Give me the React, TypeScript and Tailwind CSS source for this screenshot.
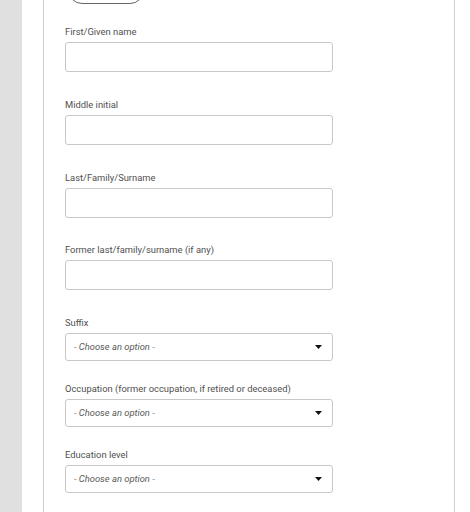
import React from "react";

const font = { fontFamily: "Roboto, 'Liberation Sans', sans-serif" };

function TextField({ label, mb }: { label: string; mb: string }) {
  return (
    <div className={mb}>
      <div className="text-[9.4px] leading-[14px] text-[#505050]">{label}</div>
      <div className="mt-[3px] h-[30px] w-[268px] rounded-[3px] border border-[#c8c8c8] bg-white" />
    </div>
  );
}

function SelectField({ label, mb }: { label: string; mb: string }) {
  return (
    <div className={mb}>
      <div className="text-[9.4px] leading-[14px] text-[#505050]">{label}</div>
      <div className="mt-[3px] flex h-[28px] w-[268px] items-center justify-between rounded-[3px] border border-[#c8c8c8] bg-white pl-[8px] pr-[10px]">
        <span className="text-[9.4px] italic text-[#5a5a5a]">- Choose an option -</span>
        <svg width="7" height="4" viewBox="0 0 7 4" className="block">
          <path d="M0 0 H7 L3.5 4 Z" fill="#111" />
        </svg>
      </div>
    </div>
  );
}

export default function App() {
  return (
    <div className="flex h-[512px] w-[470px] overflow-hidden bg-white" style={font}>
      <div className="w-[22px] shrink-0 bg-[#e0e0e0]" />
      <div className="w-[21px] shrink-0" />
      <div className="w-[412px] shrink-0 border-x border-[#cfcfcf] pl-[21px]">
        <div className="-mt-[24px] ml-[3px] h-[28px] w-[76px] rounded-full border border-[#666]" />
        <div className="mt-[21px]">
          <TextField label="First/Given name" mb="mb-[26px]" />
          <TextField label="Middle initial" mb="mb-[26px]" />
          <TextField label="Last/Family/Surname" mb="mb-[25px]" />
          <TextField label="Former last/family/surname (if any)" mb="mb-[26px]" />
          <SelectField label="Suffix" mb="mb-[21px]" />
          <SelectField label="Occupation (former occupation, if retired or deceased)" mb="mb-[21px]" />
          <SelectField label="Education level" mb="mb-[21px]" />
        </div>
      </div>
    </div>
  );
}
